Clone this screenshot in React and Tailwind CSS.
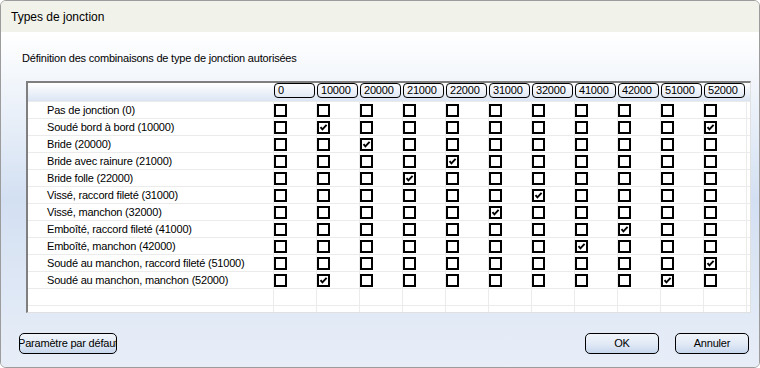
import React from "react";

const COLONNES = ["0", "10000", "20000", "21000", "22000", "31000", "32000", "41000", "42000", "51000", "52000"];

const LIGNES = [
  { nom: "Pas de jonction (0)", coches: [] },
  { nom: "Soudé bord à bord (10000)", coches: [1, 10] },
  { nom: "Bride (20000)", coches: [2] },
  { nom: "Bride avec rainure (21000)", coches: [4] },
  { nom: "Bride folle (22000)", coches: [3] },
  { nom: "Vissé, raccord fileté (31000)", coches: [6] },
  { nom: "Vissé, manchon (32000)", coches: [5] },
  { nom: "Emboîté, raccord fileté (41000)", coches: [8] },
  { nom: "Emboîté, manchon (42000)", coches: [7] },
  { nom: "Soudé au manchon, raccord fileté (51000)", coches: [10] },
  { nom: "Soudé au manchon, manchon (52000)", coches: [1, 9] },
];

function CaseACocher({ coche }) {
  return (
    <div className="w-[13px] h-[13px] border-2 border-black bg-white flex items-center justify-center">
      {coche && (
        <svg width="9" height="9" viewBox="0 0 9 9">
          <polyline points="1.5,4.2 3.4,6.4 7.6,1.8" fill="none" stroke="black" strokeWidth="1.9" />
        </svg>
      )}
    </div>
  );
}

function Bouton({ children, className = "" }) {
  return (
    <div
      className={`h-[21px] border border-black rounded-[5px] bg-gradient-to-b from-[#f1f5fb] via-[#e2eaf6] to-[#c8d7ed] flex items-center justify-center overflow-hidden whitespace-nowrap text-[11px] text-black ${className}`}
    >
      {children}
    </div>
  );
}

export default function App() {
  const cellule = "border-r border-b border-[#ebebeb] h-[17px]";
  return (
    <div
      className="w-[760px] h-[368px] flex flex-col border border-[#9c9c9c] rounded-[6px] overflow-hidden tracking-[-0.2px]"
      style={{ fontFamily: '"Liberation Sans", Arial, sans-serif' }}
    >
      {/* Barre de titre */}
      <div className="h-[31px] shrink-0 bg-[#f1f2ea] flex items-center px-[10px] text-[12px] tracking-normal text-black">
        Types de jonction
      </div>

      {/* Corps */}
      <div className="flex-1 flex flex-col bg-gradient-to-b from-white via-[#d3e0f2] to-[#e8eef8]">
        <div className="pt-[19px] pl-[21px] text-[11px] leading-[14px] text-black">
          Définition des combinaisons de type de jonction autorisées
        </div>

        {/* Grille */}
        <div className="mt-[16px] ml-[25px] w-[725px] h-[232px] bg-white border-l-2 border-t-2 border-[#7f7f7f] border-r border-b border-r-[#e0e0e0] border-b-[#e0e0e0] overflow-hidden">
          <div className="grid grid-cols-[246px_repeat(11,43px)_1fr] text-[11px] text-black">
            {/* En-tête */}
            <div className="col-span-13 grid grid-cols-subgrid h-[19px] border-b border-[#ebebeb] bg-gradient-to-b from-white to-[#dbe5f3]">
              <div />
              {COLONNES.map((c) => (
                <div key={c}>
                  <div className="w-[41px] h-[15px] border border-black rounded-[4px] bg-gradient-to-b from-[#fbfcfe] to-[#e3eaf4] pl-[3px] leading-[13px]">
                    {c}
                  </div>
                </div>
              ))}
              <div />
            </div>

            {/* Lignes */}
            {LIGNES.map((l) => (
              <React.Fragment key={l.nom}>
                <div className={`${cellule} pl-[19px] leading-[16px] whitespace-nowrap`}>{l.nom}</div>
                {COLONNES.map((c, i) => (
                  <div key={c} className={`${cellule} pt-[2px]`}>
                    <CaseACocher coche={l.coches.includes(i)} />
                  </div>
                ))}
                <div className="border-b border-[#ebebeb] h-[17px]" />
              </React.Fragment>
            ))}

            {/* Lignes vides */}
            {[0, 1].map((k) => (
              <React.Fragment key={k}>
                <div className={cellule} />
                {COLONNES.map((c) => (
                  <div key={c} className={cellule} />
                ))}
                <div className="border-b border-[#ebebeb] h-[17px]" />
              </React.Fragment>
            ))}
          </div>
        </div>

        {/* Boutons */}
        <div className="mt-[20px] flex items-center pl-[18px] pr-[10px]">
          <Bouton className="w-[98px]">Paramètre par défaut</Bouton>
          <div className="flex-1" />
          <Bouton className="w-[74px]">OK</Bouton>
          <Bouton className="w-[74px] ml-[16px]">Annuler</Bouton>
        </div>
      </div>
    </div>
  );
}
